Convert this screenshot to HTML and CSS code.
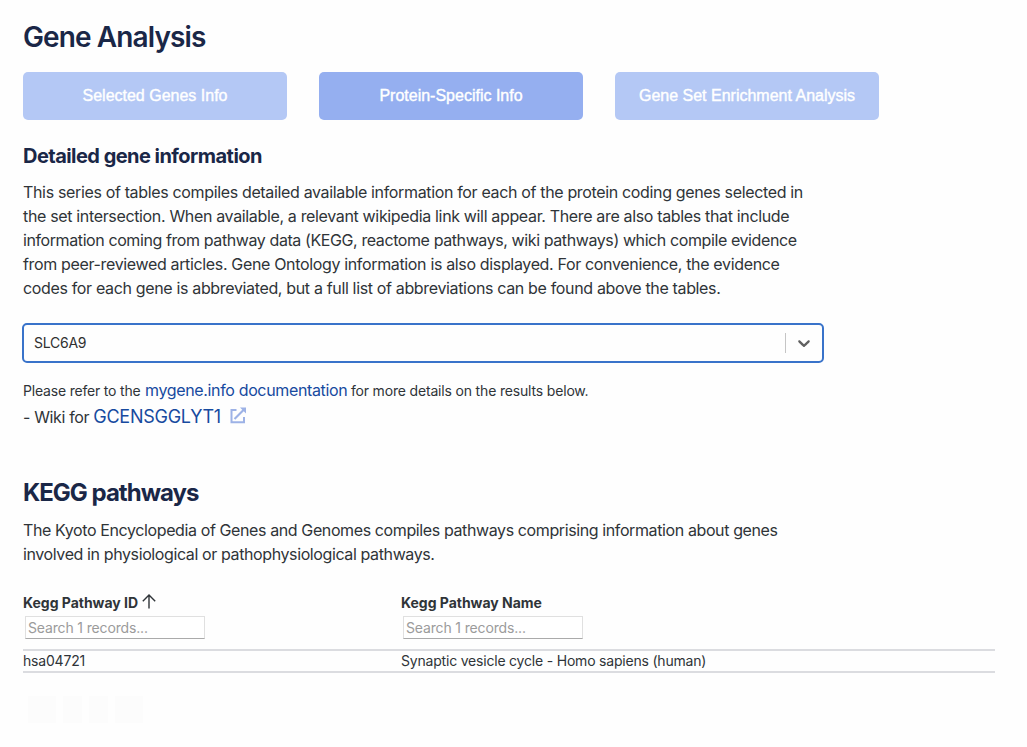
FILE: index.html
```html
<!DOCTYPE html>
<html lang="en">
<head>
<meta charset="utf-8">
<title>Gene Analysis</title>
<link rel="stylesheet" href="styles.css">
</head>
<body>
<main class="page">
  <h1 class="title"><span>Gene Analysis</span></h1>
  <nav class="tabs">
    <button class="tab">Selected Genes Info</button>
    <button class="tab active">Protein-Specific Info</button>
    <button class="tab">Gene Set Enrichment Analysis</button>
  </nav>
  <h3 class="subtitle"><span>Detailed gene information</span></h3>
  <p class="text intro"><span>This series of tables compiles detailed available information for each of the protein coding genes selected in<br>the set intersection. When available, a relevant wikipedia link will appear. There are also tables that include<br><span class="tight">information coming from pathway data (KEGG, reactome pathways, wiki pathways) which compile evidence</span><br>from peer-reviewed articles. Gene Ontology information is also displayed. For convenience, the evidence<br>codes for each gene is abbreviated, but a full list of abbreviations can be found above the tables.</span></p>
  <div class="select">
    <span class="value">SLC6A9</span>
    <span class="separator"></span>
    <svg class="chevron" width="20" height="20" viewBox="0 0 20 20"><path d="M4.516 7.548c0.436-0.446 1.043-0.481 1.576 0l3.908 3.747 3.908-3.747c0.533-0.481 1.141-0.446 1.574 0 0.436 0.445 0.408 1.197 0 1.615-0.406 0.418-4.695 4.502-4.695 4.502-0.217 0.223-0.502 0.335-0.787 0.335s-0.57-0.112-0.789-0.335c0 0-4.287-4.084-4.695-4.502s-0.436-1.17 0-1.615z"/></svg>
  </div>
  <p class="refer"><span class="small">Please refer to the</span> <a class="doc">mygene.info documentation</a> <span class="small after">for more details on the results below.</span></p>
  <p class="wiki"><span class="for">- Wiki for</span> <a class="gene">GCENSGGLYT1</a>
    <svg class="external" width="17" height="17" viewBox="0 0 17 17"><path d="M6.5 3H1.5V15.2H14V10" fill="none" stroke="currentColor" stroke-width="2"/><path d="M4.5 12 14 2.5" fill="none" stroke="currentColor" stroke-width="2.2"/><path d="M10 .4H16V6.4Z" fill="currentColor"/></svg>
  </p>
  <h2 class="section"><span>KEGG pathways</span></h2>
  <p class="text kegg"><span>The Kyoto Encyclopedia of Genes and Genomes compiles pathways comprising information about genes<br>involved in physiological or pathophysiological pathways.</span></p>
  <div class="table">
    <div class="head">
      <div class="col"><div class="label"><span>Kegg Pathway ID</span><svg class="sort" width="14" height="15" viewBox="0 0 14 15"><path d="M7 14.5V1.3M.8 7.2 7 1.1l6.2 6.1" fill="none" stroke="currentColor" stroke-width="1.4"/></svg></div><input class="search" placeholder="Search 1 records..."></div>
      <div class="col"><div class="label"><span>Kegg Pathway Name</span></div><input class="search" placeholder="Search 1 records..."></div>
    </div>
    <div class="row"><span class="cell">hsa04721</span><span class="cell name">Synaptic vesicle cycle - Homo sapiens (human)</span></div>
  </div>
  <div class="pager"><i class="page-button wide"></i><i class="page-button"></i><i class="page-button"></i><i class="page-button wide"></i></div>
</main>
</body>
</html>
```
FILE: styles.css
```css
* { box-sizing: border-box; }
body { margin: 0; background: #fefefe; font-family: Inter, "Liberation Sans", sans-serif; color: #2f3438; }
.page { display: flex; flex-direction: column; padding: 20px 32px 0 23px; white-space: nowrap; }
h1, h2, h3, p { margin: 0; }
.title { height: 34px; line-height: 34px; font-size: 28px; font-weight: 600; letter-spacing: -0.88px; color: #1a2747; }
.tabs { display: flex; gap: 32px; margin-top: 18px; }
.tab { width: 264px; height: 48px; padding: 0; border: 0; border-radius: 5px; background: #b4c8f5; color: #fff; font: 16px "Liberation Sans", Arial, sans-serif; -webkit-text-stroke: 0.4px #fff; }
.tab.active { background: #95aff0; }
.subtitle { height: 24px; line-height: 24px; margin-top: 24px; font-size: 20px; font-weight: 700; letter-spacing: -0.54px; color: #1a2747; }
.text { font-size: 16px; line-height: 24px; letter-spacing: -0.345px; }
.tight { letter-spacing: -0.405px; }
.intro { margin-top: 12px; }
.select { display: flex; align-items: center; width: 802px; height: 40px; margin: 23px 0 0 -1px; padding: 0 8px 0 10px; border: 2px solid #3973ca; border-radius: 5px; }
.value { flex: 1; margin-top: -1px; font-size: 14px; letter-spacing: -0.25px; color: #303030; }
.separator { width: 1px; height: 20px; margin-right: 8px; background: #c5c5c5; }
.chevron { fill: #606060; }
.refer { height: 24px; line-height: 24px; margin-top: 15px; font-size: 16px; }
.small { font-size: 14px; letter-spacing: -0.19px; }
.after { margin-left: -1px; letter-spacing: -0.17px; }
.doc { letter-spacing: -0.35px; color: #174a9f; }
.wiki { display: flex; align-items: center; gap: 4px; height: 28px; margin-top: 1px; font-size: 16px; }
.for { letter-spacing: -0.35px; }
.gene { margin-top: -2px; letter-spacing: -0.25px; font-size: 18px; color: #174a9f; }
.external { margin: -4px 0 0 5px; color: #9db2e6; }
.section { height: 30px; line-height: 30px; margin-top: 47px; font-size: 24px; font-weight: 700; letter-spacing: -1px; color: #1a2747; }
.kegg { margin-top: 10px; letter-spacing: -0.39px; }
.table { margin-top: 26px; font-size: 14px; }
.head, .row { display: grid; grid-template-columns: 378px 1fr; width: 972px; }
.head { height: 59px; border-bottom: 2px solid #dbdce0; }
.label { display: flex; align-items: center; gap: 4px; height: 20px; font-weight: 700; letter-spacing: -0.02px; }
.sort { margin-top: -2px; }
.search { display: block; width: 180px; height: 23px; margin: 4px 0 0 2px; padding: 0 2px; border: 1px solid #e0e0e0; border-bottom-color: #aaa; background: #fff; font: 14px Inter, sans-serif; letter-spacing: -0.15px; }
.search::placeholder { color: #9b9b9b; }
.row { height: 22px; align-items: center; border-bottom: 2px solid #dbdce0; }
.cell { margin-top: -1px; letter-spacing: -0.2px; }
.pager { display: flex; gap: 7px; margin: 23px 0 0 5px; }
.page-button { width: 19px; height: 27px; background: #fcfcfc; }
.page-button.wide { width: 28px; }
```
